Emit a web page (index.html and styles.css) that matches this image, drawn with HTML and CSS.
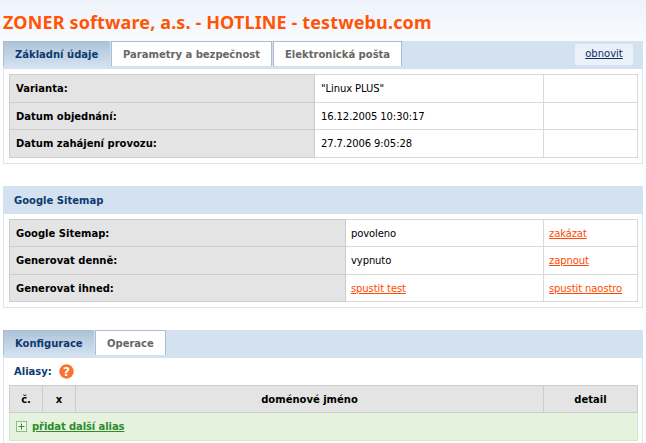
FILE: index.html
```html
<!DOCTYPE html>
<html lang="cs">
<head>
<meta charset="utf-8">
<title>ZONER software, a.s. - HOTLINE - testwebu.com</title>
<link rel="stylesheet" href="styles.css">
</head>
<body>
<h1 class="title">ZONER software, a.s. - HOTLINE - testwebu.com</h1>

<section class="panel">
  <div class="bar">
    <a class="tab tab-active">Základní údaje</a>
    <a class="tab">Parametry a bezpečnost</a>
    <a class="tab tab-mail">Elektronická pošta</a>
    <a class="refresh" href="#">obnovit</a>
  </div>
  <div class="body">
    <table class="grid info">
      <tr class="tall"><th>Varianta:</th><td>"Linux PLUS"</td><td></td></tr>
      <tr><th>Datum objednání:</th><td>16.12.2005 10:30:17</td><td></td></tr>
      <tr class="tall"><th>Datum zahájení provozu:</th><td>27.7.2006 9:05:28</td><td></td></tr>
    </table>
  </div>
</section>

<section class="panel">
  <h2 class="bar bar-title">Google Sitemap</h2>
  <div class="body">
    <table class="grid sitemap">
      <tr><th>Google Sitemap:</th><td>povoleno</td><td><a href="#">zakázat</a></td></tr>
      <tr class="tall"><th>Generovat denně:</th><td>vypnuto</td><td><a href="#">zapnout</a></td></tr>
      <tr><th>Generovat ihned:</th><td><a href="#">spustit test</a></td><td><a href="#">spustit naostro</a></td></tr>
    </table>
  </div>
</section>

<section class="panel panel-last">
  <div class="bar">
    <a class="tab tab-active tab-config">Konfigurace</a>
    <a class="tab tab-ops">Operace</a>
  </div>
  <div class="body body-last">
    <div class="alias-head">
      <span>Aliasy:</span>
      <svg class="help" width="15" height="15" viewBox="0 0 15 15" aria-hidden="true"><circle cx="7.5" cy="7.5" r="7.2" fill="#f9732e"/><text x="7.5" y="12" text-anchor="middle" class="help-mark">?</text></svg>
    </div>
    <table class="grid aliases">
      <tr class="head"><th>č.</th><th>x</th><th>doménové jméno</th><th>detail</th></tr>
      <tr class="add"><td colspan="4"><span class="add-inner"><svg class="plus" width="11" height="11" viewBox="0 0 11 11" aria-hidden="true"><rect x=".5" y=".5" width="10" height="10" fill="#eef6ea" stroke="#8fbb86"/><path d="M5.5 2.5v6M2.5 5.5h6" stroke="#3d8a36"/></svg><a href="#">přidat další alias</a></span></td></tr>
    </table>
  </div>
</section>
</body>
</html>
```
FILE: styles.css
```css
html, body { margin: 0; padding: 0; }
body {
  padding: 0 3px;
  height: 443px;
  overflow: hidden;
  box-sizing: border-box;
  background: linear-gradient(#eef3fb 0, #f6f9fd 30px, #ffffff 60px) no-repeat;
  font-family: "DejaVu Sans", sans-serif;
  font-size: 10px;
  color: #000;
}
.title {
  margin: 0;
  height: 41px;
  padding-top: 12px;
  box-sizing: border-box;
  font-family: "Noto Sans", sans-serif;
  font-size: 18px;
  line-height: 20px;
  letter-spacing: 0.13px;
  font-weight: bold;
  color: #ff5506;
  white-space: nowrap;
}
.panel { margin-bottom: 22px; }
.panel-last { margin-bottom: 0; }
.bar {
  display: flex;
  align-items: flex-start;
  height: 28px;
  margin: 0;
  background: #d3e1f0;
}
.bar-title {
  align-items: center;
  padding-left: 11px;
  font-size: 10px;
  font-weight: bold;
  color: #0d3a6e;
}
.tab {
  height: 25px;
  box-sizing: border-box;
  margin-right: 1px;
  padding: 0 11px;
  border: 1px solid #a9bdd2;
  border-bottom: 0;
  background: #fff;
  color: #666;
  font-weight: bold;
  line-height: 26px;
  white-space: nowrap;
}
.tab-active {
  width: 107px;
  background: linear-gradient(#aec3d9, #d3e1f0);
  color: #0d3a6e;
  border-color: #a9bdd2 transparent transparent #a9bdd2;
}
.tab-mail { width: 129px; }
.tab-config { width: 91px; }
.tab-ops { width: 71px; }
.refresh {
  margin: 3px 10px 0 auto;
  width: 58px;
  box-sizing: border-box;
  text-align: center;
  height: 21px;
  line-height: 20px;
  background: #eaf1f8;
  color: #0d2f66;
}
.body {
  padding: 5px;
  background: #fff;
  border: 1px solid #dde5ee;
  border-top: 0;
}
.body-last { border-bottom: 0; padding-bottom: 0; height: 85px; box-sizing: border-box; }
.grid {
  width: 629px;
  border-collapse: collapse;
  table-layout: fixed;
}
.grid th, .grid td {
  height: 27px;
  padding: 0 6px;
  border: 1px solid #d9d9d9;
  box-sizing: border-box;
  text-align: left;
  font-size: 10px;
}
.grid .tall th, .grid .tall td { height: 28px; }
.grid th {
  background: #e4e4e4;
  border-color: #cccccc;
  font-weight: bold;
}
.grid td { letter-spacing: -0.1px; }
.grid td a { color: #ff4a00; }
.info th:first-child { width: 305px; }
.info td:nth-child(3), .sitemap td:nth-child(3) { width: 94px; }
.sitemap th:first-child { width: 336px; }
.sitemap td { padding-left: 5px; }
.alias-head {
  display: flex;
  align-items: center;
  gap: 7px;
  height: 27px;
  margin-top: -5px;
  padding-left: 5px;
  font-weight: bold;
  color: #0d3a6e;
}
.help-mark { font-size: 12px; font-weight: bold; fill: #fff; }
.aliases th { text-align: center; }
.aliases th:nth-child(1), .aliases th:nth-child(2) { width: 33px; }
.aliases th:nth-child(4) { width: 94px; }
.aliases .add td {
  height: 28px;
  background: #e5f2de;
  border-color: #d5e8cb;
}
.add-inner { display: flex; align-items: center; gap: 5px; }
.grid .add a { color: #2e8a2c; font-weight: bold; }
```
